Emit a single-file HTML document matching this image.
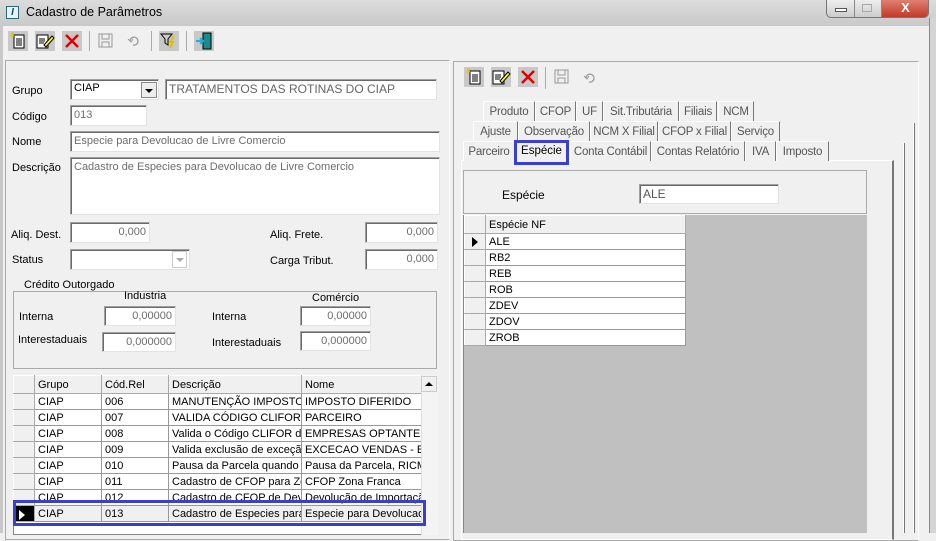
<!DOCTYPE html>
<html><head><meta charset="utf-8"><style>
*{box-sizing:border-box;margin:0;padding:0}
body{width:936px;height:533px;overflow:hidden;background:#f0f0f0;font-family:"Liberation Sans",sans-serif;font-size:11px;color:#000;position:relative}
.a{position:absolute}
.in{position:absolute;background:#fff;border:1px solid #a0a0a0;border-right-color:#e3e3e3;border-bottom-color:#e3e3e3;box-shadow:inset 1px 1px 0 #696969;color:#6d6d6d;padding:3px 3px 0;white-space:nowrap;overflow:hidden}
.r{text-align:right}
.btn{position:absolute;width:20px;height:20px;background:#c8c8c8}
.tab{position:absolute;height:20px;border:1px solid #fff;border-right-color:#777;border-bottom:none;background:#f0f0f0;color:#555;text-align:center;padding-top:4px;font-size:11.5px;white-space:nowrap;letter-spacing:-0.2px}
table{border-collapse:collapse;position:absolute;font-size:11px}
td{border:1px solid #999;height:16px;padding:0 3px;white-space:nowrap;overflow:hidden;background:#fff}
td.h{background:#f0f0f0;border-color:#fff #aaa #aaa #fff}
</style></head><body>
<div class="a" style="left:0;top:0;width:936px;height:26px;background:linear-gradient(#dcdcdc,#c9c9c9)"></div>
<div class="a" style="left:6px;top:6px;width:13px;height:13px;border:1px solid #2a6a7a;background:#e8f4f4;font-size:10px;font-weight:bold;color:#1a4a60;text-align:center;line-height:11px;font-style:italic">I</div>
<div class="a" style="left:26px;top:5px;font-size:12.5px;color:#000">Cadastro de Parâmetros</div>
<div class="a" style="left:826px;top:0;width:103px;height:18px;border:1px solid #777;border-top:none;border-radius:0 0 5px 5px;background:linear-gradient(#eee,#ccc);overflow:hidden">
 <div class="a" style="left:27px;top:0;width:1px;height:18px;background:#888"></div>
 <div class="a" style="left:54px;top:0;width:1px;height:18px;background:#888"></div>
 <div class="a" style="left:8px;top:8px;width:12px;height:4px;border:1px solid #555;background:#fff"></div>
 <div class="a" style="left:35px;top:4px;width:10px;height:8px;border:1px solid #aaa"></div>
 <div class="a" style="left:55px;top:0;width:47px;height:17px;background:linear-gradient(#e08070,#c03a28);color:#fff;font-weight:bold;font-size:13px;text-align:center;line-height:15px">X</div>
</div>
<div class="a" style="left:929px;top:18px;width:7px;height:515px;background:#d4d4d4;border-left:1px solid #888"></div>
<div class="a" style="left:0;top:26px;width:3px;height:507px;background:#c8c8c8"></div>
<div class="btn" style="left:8px;top:31px"><svg width="20" height="20"><rect x="6" y="4" width="10" height="13" fill="#fff" stroke="#000"/><path d="M8 8h6M8 10h6M8 12h6M8 14h6" stroke="#000"/><path d="M3 2l3 3M5 1v3M2 5h3" stroke="#e0c000"/></svg></div>
<div class="btn" style="left:35px;top:31px"><svg width="20" height="20"><rect x="2" y="4" width="11" height="13" fill="#fff" stroke="#000"/><path d="M4 8h6M4 10h6M4 12h5" stroke="#000"/><path d="M9 14l8-9 2 2-8 9z" fill="#ff0" stroke="#000"/></svg></div>
<div class="btn" style="left:62px;top:31px"><svg width="20" height="20"><path d="M4 4l12 12M16 4L4 16" stroke="#e00000" stroke-width="2.5"/></svg></div>
<div class="a" style="left:89px;top:31px;width:1px;height:20px;background:#aaa"></div>
<div class="a" style="left:98px;top:33px"><svg width="16" height="16"><rect x="1" y="1" width="13" height="13" fill="none" stroke="#999"/><rect x="4" y="1" width="7" height="5" fill="none" stroke="#999"/><rect x="4" y="9" width="7" height="5" fill="none" stroke="#999"/></svg></div>
<div class="a" style="left:127px;top:35px"><svg width="16" height="12"><path d="M3 6a4 4 0 1 1 3 4" fill="none" stroke="#999" stroke-width="1.3"/><path d="M1 4l3 3 2-3" fill="none" stroke="#999"/></svg></div>
<div class="a" style="left:151px;top:31px;width:1px;height:20px;background:#aaa"></div>
<div class="btn" style="left:159px;top:31px"><svg width="20" height="20"><path d="M2 3h11l-4 5v6l-3-2V8z" fill="#ccc" stroke="#000"/><path d="M15 5l-4 6h3l-3 6" fill="none" stroke="#e0c000" stroke-width="2"/></svg></div>
<div class="a" style="left:186px;top:31px;width:1px;height:20px;background:#aaa"></div>
<div class="btn" style="left:194px;top:31px"><svg width="20" height="20"><rect x="9" y="2" width="8" height="16" fill="#1a8a8a" stroke="#000"/><path d="M2 10h7M6 7l3 3-3 3" stroke="#20b0e0" stroke-width="2" fill="none"/></svg></div>
<div class="a" style="left:5px;top:60px;width:445px;height:480px;border:1px solid #aaa;border-right-color:#fff"></div>
<div class="a" style="left:12px;top:85px">Grupo</div>
<div class="in" style="left:70px;top:79px;width:89px;height:21px;color:#000;padding-top:2px">CIAP</div>
<div class="a" style="left:141px;top:82px;width:16px;height:16px;border:1px solid #888;background:#eee"><div class="a" style="left:3px;top:6px;border:4px solid transparent;border-top:4px solid #000;border-bottom:none"></div></div>
<div class="in" style="left:165px;top:79px;width:272px;height:21px;font-size:12px;color:#666;padding-top:2px">TRATAMENTOS DAS ROTINAS DO CIAP</div>
<div class="a" style="left:12px;top:111px">Código</div>
<div class="in" style="left:70px;top:105px;width:77px;height:21px">013</div>
<div class="a" style="left:12px;top:136px">Nome</div>
<div class="in" style="left:70px;top:131px;width:370px;height:21px">Especie para Devolucao de Livre Comercio</div>
<div class="a" style="left:12px;top:162px">Descrição</div>
<div class="in" style="left:70px;top:157px;width:370px;height:58px">Cadastro de Especies para Devolucao de Livre Comercio</div>
<div class="a" style="left:11px;top:229px">Aliq. Dest.</div>
<div class="in r" style="left:70px;top:222px;width:80px;height:21px">0,000</div>
<div class="a" style="left:270px;top:229px">Aliq. Frete.</div>
<div class="in r" style="left:365px;top:222px;width:73px;height:21px">0,000</div>
<div class="a" style="left:12px;top:254px">Status</div>
<div class="in" style="left:70px;top:249px;width:120px;height:21px"></div>
<div class="a" style="left:172px;top:251px;width:15px;height:17px;border:1px solid #ccc"><div class="a" style="left:3px;top:6px;border:4px solid transparent;border-top:4px solid #aaa;border-bottom:none"></div></div>
<div class="a" style="left:270px;top:255px">Carga Tribut.</div>
<div class="in r" style="left:365px;top:249px;width:73px;height:21px">0,000</div>
<div class="a" style="left:13px;top:291px;width:424px;height:78px;border:1px solid #aaa"></div>
<div class="a" style="left:21px;top:279px;background:#f0f0f0;padding:0 3px">Crédito Outorgado</div>
<div class="a" style="left:124px;top:290px">Industria</div>
<div class="a" style="left:312px;top:292px">Comércio</div>
<div class="a" style="left:19px;top:311px">Interna</div>
<div class="in r" style="left:104px;top:306px;width:72px;height:20px">0,00000</div>
<div class="a" style="left:212px;top:311px">Interna</div>
<div class="in r" style="left:300px;top:306px;width:71px;height:20px">0,00000</div>
<div class="a" style="left:18px;top:334px">Interestaduais</div>
<div class="in r" style="left:102px;top:332px;width:74px;height:20px">0,000000</div>
<div class="a" style="left:212px;top:337px">Interestaduais</div>
<div class="in r" style="left:300px;top:331px;width:71px;height:20px">0,000000</div>
<div class="a" style="left:13px;top:375px;width:425px;height:160px;background:#fff;border:1px solid #888"></div>
<table style="left:13px;top:375px;width:409px;table-layout:fixed">
<colgroup><col style="width:21px"><col style="width:67px"><col style="width:67px"><col style="width:133px"><col style="width:121px"></colgroup>
<tr><td class="h" style="height:18px"></td><td class="h">Grupo</td><td class="h">Cód.Rel</td><td class="h">Descrição</td><td class="h">Nome</td></tr>
<tr><td class="h"></td><td>CIAP</td><td>006</td><td>MANUTENÇÃO IMPOSTO D</td><td>IMPOSTO DIFERIDO</td></tr>
<tr><td class="h"></td><td>CIAP</td><td>007</td><td>VALIDA CÓDIGO CLIFOR E</td><td>PARCEIRO</td></tr>
<tr><td class="h"></td><td>CIAP</td><td>008</td><td>Valida o Código CLIFOR de</td><td>EMPRESAS OPTANTES P</td></tr>
<tr><td class="h"></td><td>CIAP</td><td>009</td><td>Valida exclusão de exceção</td><td>EXCECAO VENDAS - EXC</td></tr>
<tr><td class="h"></td><td>CIAP</td><td>010</td><td>Pausa da Parcela quando r</td><td>Pausa da Parcela, RICMS</td></tr>
<tr><td class="h"></td><td>CIAP</td><td>011</td><td>Cadastro de CFOP para Zo</td><td>CFOP Zona Franca</td></tr>
<tr><td class="h"></td><td>CIAP</td><td>012</td><td>Cadastro de CFOP de Dev</td><td>Devolução de Importaçã</td></tr>
<tr><td class="h" style="background:#000"></td><td style="background:#f0f0f0">CIAP</td><td style="background:#f0f0f0">013</td><td style="background:#f0f0f0">Cadastro de Especies para</td><td style="background:#f0f0f0">Especie para Devolucao</td></tr>
</table>
<div class="a" style="left:19px;top:510px;border:5px solid transparent;border-left:6px solid #fff;border-right:none"></div>
<div class="a" style="left:421px;top:375px;width:17px;height:160px;background:#f4f4f4;border-left:1px solid #ddd"></div>
<div class="a" style="left:421px;top:376px;width:16px;height:16px;background:#f0f0f0;border:1px solid #ccc"><div class="a" style="left:3px;top:5px;border:4px solid transparent;border-bottom:4px solid #000;border-top:none"></div></div>
<div class="a" style="left:13px;top:500px;width:413px;height:26px;border:3px solid #3a3fd0"></div>
<div class="a" style="left:453px;top:61px;width:466px;height:480px;border:1px solid #aaa;border-right-color:#fff"></div>
<div class="btn" style="left:464px;top:67px"><svg width="20" height="20"><rect x="6" y="4" width="10" height="13" fill="#fff" stroke="#000"/><path d="M8 8h6M8 10h6M8 12h6M8 14h6" stroke="#000"/><path d="M3 2l3 3M5 1v3M2 5h3" stroke="#e0c000"/></svg></div>
<div class="btn" style="left:491px;top:67px"><svg width="20" height="20"><rect x="2" y="4" width="11" height="13" fill="#fff" stroke="#000"/><path d="M4 8h6M4 10h6M4 12h5" stroke="#000"/><path d="M9 14l8-9 2 2-8 9z" fill="#ff0" stroke="#000"/></svg></div>
<div class="btn" style="left:518px;top:67px"><svg width="20" height="20"><path d="M4 4l12 12M16 4L4 16" stroke="#e00000" stroke-width="2.5"/></svg></div>
<div class="a" style="left:545px;top:67px;width:1px;height:22px;background:#aaa"></div>
<div class="a" style="left:554px;top:69px"><svg width="16" height="16"><rect x="1" y="1" width="13" height="13" fill="none" stroke="#999"/><rect x="4" y="1" width="7" height="5" fill="none" stroke="#999"/><rect x="4" y="9" width="7" height="5" fill="none" stroke="#999"/></svg></div>
<div class="a" style="left:583px;top:72px"><svg width="16" height="12"><path d="M3 6a4 4 0 1 1 3 4" fill="none" stroke="#999" stroke-width="1.3"/><path d="M1 4l3 3 2-3" fill="none" stroke="#999"/></svg></div>
<div class="a" style="left:913px;top:123px;width:2px;height:410px;border-left:1px solid #fff;border-right:1px solid #777"></div>
<div class="a" style="left:903px;top:143px;width:2px;height:390px;border-left:1px solid #fff;border-right:1px solid #777"></div>
<div class="a" style="left:461px;top:160px;width:433px;height:380px;border:1px solid #fff;border-right:2px solid #777"></div>
<div class="tab" style="left:483px;top:101px;width:52px">Produto</div>
<div class="tab" style="left:535px;top:101px;width:41px">CFOP</div>
<div class="tab" style="left:576px;top:101px;width:27px">UF</div>
<div class="tab" style="left:603px;top:101px;width:76px">Sit.Tributária</div>
<div class="tab" style="left:679px;top:101px;width:38px">Filiais</div>
<div class="tab" style="left:718px;top:101px;width:36px">NCM</div>
<div class="tab" style="left:473px;top:121px;width:45px">Ajuste</div>
<div class="tab" style="left:518px;top:121px;width:72px">Observação</div>
<div class="tab" style="left:590px;top:121px;width:68px">NCM X Filial</div>
<div class="tab" style="left:658px;top:121px;width:73px">CFOP x Filial</div>
<div class="tab" style="left:731px;top:121px;width:49px">Serviço</div>
<div class="tab" style="left:463px;top:141px;width:52px">Parceiro</div>
<div class="tab" style="left:570px;top:141px;width:81px">Conta Contábil</div>
<div class="tab" style="left:651px;top:141px;width:94px">Contas Relatório</div>
<div class="tab" style="left:745px;top:141px;width:31px">IVA</div>
<div class="tab" style="left:776px;top:141px;width:53px">Imposto</div>
<div class="a" style="left:514px;top:140px;width:55px;height:25px;border:3px solid #3a3fd0;background:#f0f0f0;text-align:center;padding-top:2px;font-size:11.5px">Espécie</div>
<div class="a" style="left:463px;top:170px;width:404px;height:44px;border:1px solid #aaa"></div>
<div class="a" style="left:502px;top:188px;font-size:12px">Espécie</div>
<div class="in" style="left:639px;top:184px;width:140px;height:20px;color:#555;font-size:12px;padding-top:2px">ALE</div>
<div class="a" style="left:463px;top:215px;width:404px;height:318px;background:#c0c0c0;border-left:1px solid #888"></div>
<table style="left:464px;top:215px;width:221px;table-layout:fixed">
<colgroup><col style="width:21px"><col style="width:200px"></colgroup>
<tr><td class="h" style="height:18px"></td><td class="h">Espécie NF</td></tr>
<tr><td class="h"></td><td>ALE</td></tr>
<tr><td class="h"></td><td>RB2</td></tr>
<tr><td class="h"></td><td>REB</td></tr>
<tr><td class="h"></td><td>ROB</td></tr>
<tr><td class="h"></td><td>ZDEV</td></tr>
<tr><td class="h"></td><td>ZDOV</td></tr>
<tr><td class="h"></td><td>ZROB</td></tr>
</table>
<div class="a" style="left:472px;top:237px;border:5px solid transparent;border-left:6px solid #000;border-right:none"></div>
</body></html>
